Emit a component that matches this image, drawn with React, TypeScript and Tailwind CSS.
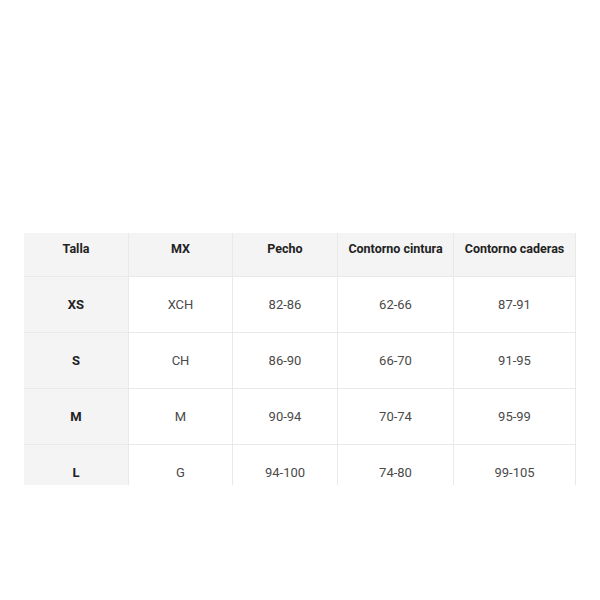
import React from "react";

const headers = ["Talla", "MX", "Pecho", "Contorno cintura", "Contorno caderas"];
const rows = [
  ["XS", "XCH", "82-86", "62-66", "87-91"],
  ["S", "CH", "86-90", "66-70", "91-95"],
  ["M", "M", "90-94", "70-74", "95-99"],
  ["L", "G", "94-100", "74-80", "99-105"],
];

export default function App() {
  return (
    <div className="w-[600px] h-[600px] bg-white" style={{ fontFamily: "Roboto, 'Noto Sans', sans-serif" }}>
      <div className="pt-[233px] pl-[24px]">
        <div className="w-[552px] h-[252px] overflow-hidden">
          <div className="grid grid-cols-[105px_104px_105px_116px_122px] leading-[20px]">
            {headers.map((h) => (
              <div
                key={h}
                className="h-[44px] bg-[#f4f4f4] border-r border-b border-[#e9e9e9] flex justify-center pt-[6px] text-[12.5px] font-bold text-[#222222]"
              >
                {h}
              </div>
            ))}
            {rows.map((r) =>
              r.map((c, i) => (
                <div
                  key={r[0] + i}
                  className={
                    i === 0
                      ? "h-[56px] bg-[#f4f4f4] border-r border-b border-[#e9e9e9] flex items-center justify-center text-[13px] font-bold text-[#222222]"
                      : "h-[56px] bg-white border-r border-b border-[#e9e9e9] flex items-center justify-center text-[13px] text-[#4a4a4a]"
                  }
                >
                  {c}
                </div>
              ))
            )}
          </div>
        </div>
      </div>
    </div>
  );
}
